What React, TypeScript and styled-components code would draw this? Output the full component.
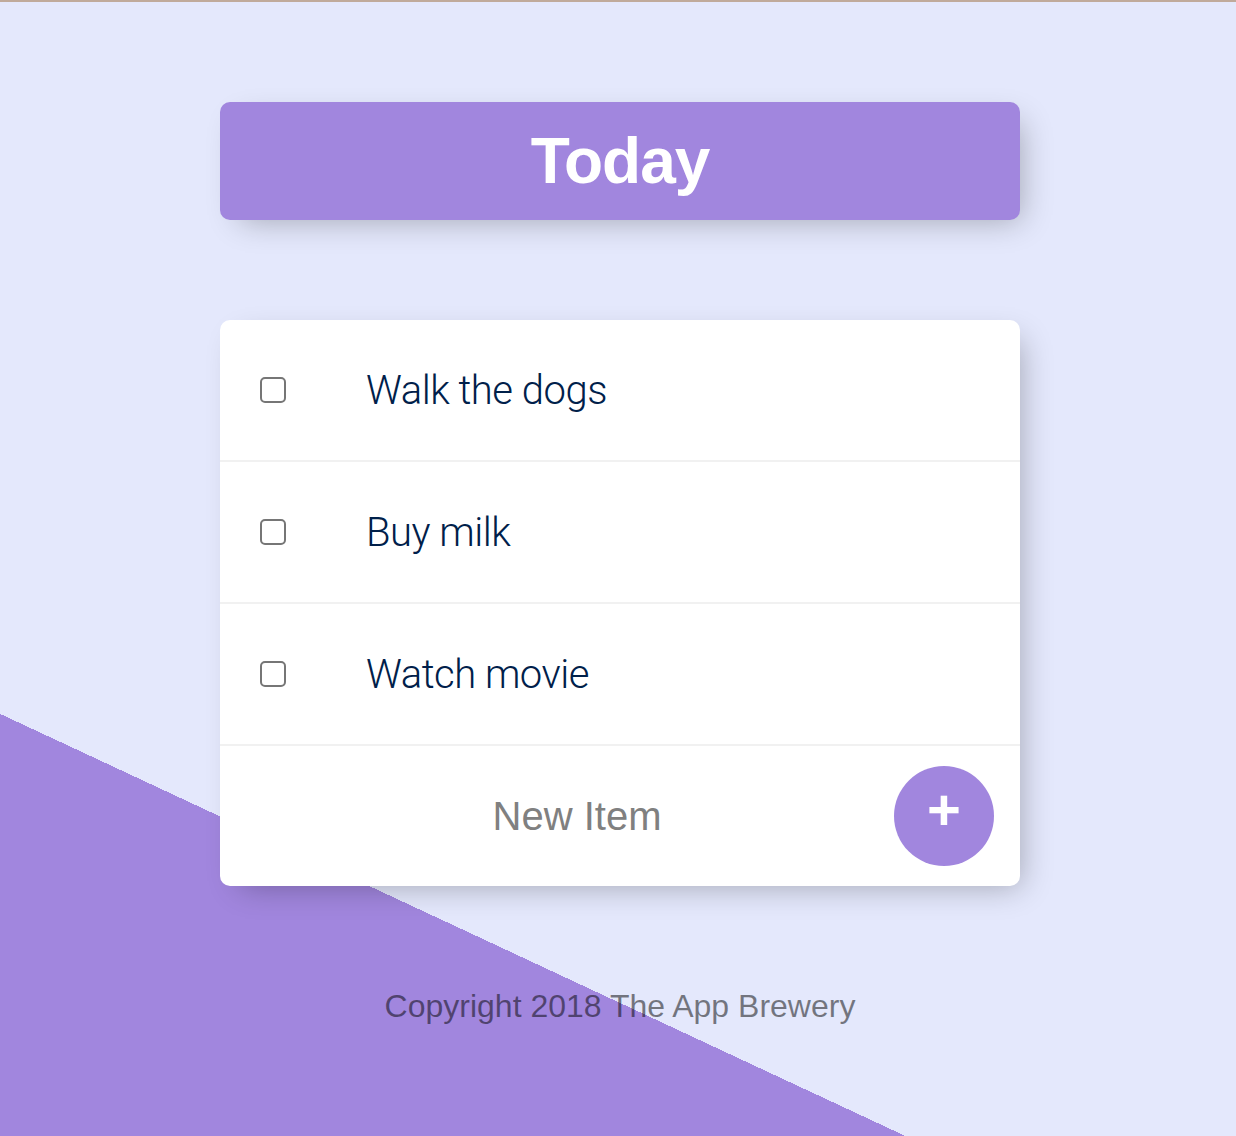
import React from "react";
import styled, { createGlobalStyle } from "styled-components";

const PURPLE = "#A186DE";
const BG = "#E4E8FC";

const GlobalStyle = createGlobalStyle`
  html {
    background-color: ${BG};
    background-image: linear-gradient(25deg, ${PURPLE} 50%, ${BG} 50%);
    background-size: 1236px 2004px;
    background-repeat: no-repeat;
    height: 1136px;
    overflow: hidden;
  }
  body {
    margin: 0;
    font-family: "Helvetica Neue", "Liberation Sans", Arial, sans-serif;
  }
`;

const TopRule = styled.div`
  height: 2px;
  background: #c0aa9b;
`;

const Page = styled.main`
  padding: 100px 0 0 4px;
  display: flex;
  flex-direction: column;
  align-items: center;
`;

const Box = styled.section<{ $gap?: number }>`
  width: 800px;
  margin-top: ${(p) => p.$gap ?? 0}px;
  background: #fff;
  border-radius: 10px;
  box-shadow: 10px 10px 30px -10px rgba(0, 0, 0, 0.3);
`;

const Heading = styled(Box)`
  background: ${PURPLE};
  text-align: center;
`;

const Title = styled.h1`
  margin: 0;
  padding: 20px;
  color: #fff;
  font-family: "Liberation Sans", Arial, sans-serif;
  font-weight: 700;
  font-size: 64px;
  line-height: 78px;
  letter-spacing: -1px;
`;

const Item = styled.div`
  min-height: 140px;
  display: flex;
  align-items: center;
  border-bottom: 2px solid #f1f1f1;
`;

const Check = styled.input`
  appearance: none;
  margin: 0 40px;
  width: 26px;
  height: 26px;
  box-sizing: border-box;
  border: 2px solid #767676;
  border-radius: 5px;
  background: #fff;
  flex: none;
`;

const Label = styled.p`
  margin: 0;
  padding: 40px;
  font-family: "Roboto", "Liberation Sans", sans-serif;
  font-size: 40px;
  font-weight: 300;
  letter-spacing: -0.5px;
  color: #00204a;
`;

const Form = styled.form`
  display: flex;
  align-items: center;
  height: 140px;
  padding-left: 42px;
  gap: 2px;
`;

const TextInput = styled.input`
  width: 630px;
  height: 120px;
  border: none;
  background: transparent;
  text-align: center;
  font-family: "Liberation Sans", Arial, sans-serif;
  font-size: 40px;
  outline: none;
  padding: 0;
  &::placeholder {
    color: #808080;
    opacity: 1;
  }
`;

const AddButton = styled.button`
  width: 100px;
  height: 100px;
  border-radius: 50%;
  border: 0;
  background: ${PURPLE};
  color: #fff;
  font-family: "Liberation Sans", Arial, sans-serif;
  font-size: 58px;
  font-weight: 700;
  line-height: 1;
  padding: 0 0 12px;
  flex: none;
`;

const Footer = styled.footer`
  margin-top: 100px;
  color: rgba(0, 0, 0, 0.5);
  text-align: center;
  font-family: "Liberation Sans", Arial, sans-serif;
  font-size: 32px;
  line-height: 40px;
`;

const items = ["Walk the dogs", "Buy milk", "Watch movie"];

export default function App() {
  return (
    <>
      <GlobalStyle />
      <TopRule />
      <Page>
        <Heading>
          <Title>Today</Title>
        </Heading>
        <Box $gap={100}>
          {items.map((t) => (
            <Item key={t}>
              <Check type="checkbox" />
              <Label>{t}</Label>
            </Item>
          ))}
          <Form onSubmit={(e) => e.preventDefault()}>
            <TextInput type="text" placeholder="New Item" autoComplete="off" />
            <AddButton type="submit">+</AddButton>
          </Form>
        </Box>
        <Footer>Copyright 2018 The App Brewery</Footer>
      </Page>
    </>
  );
}
